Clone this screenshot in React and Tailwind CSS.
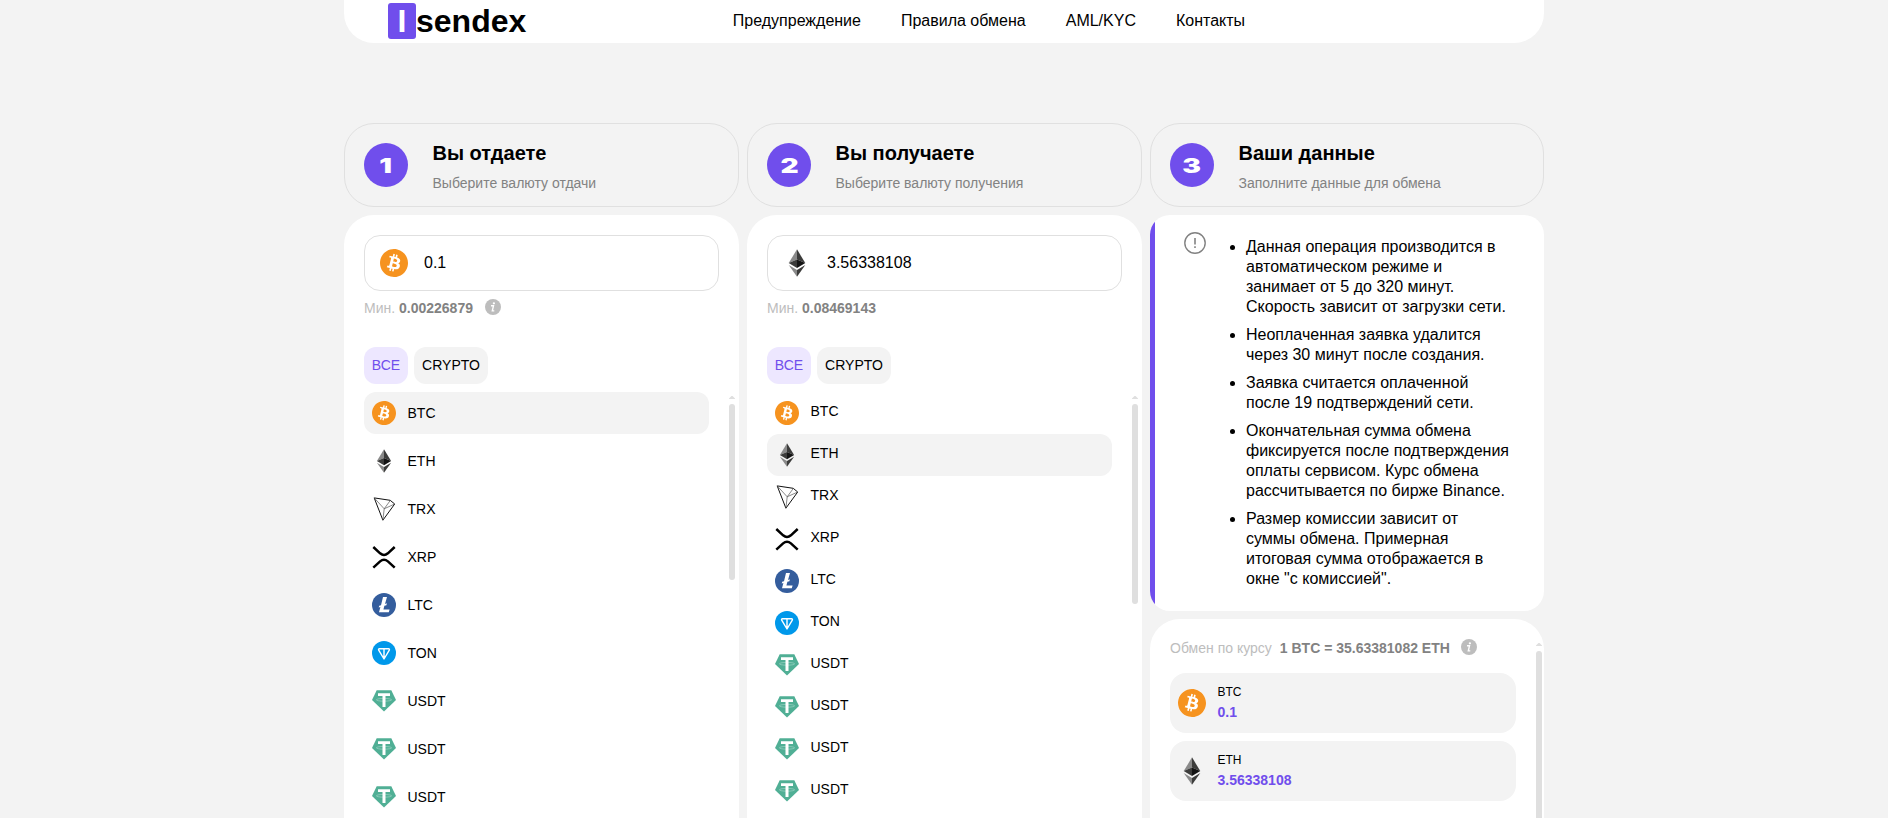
import { SiBitcoin } from "react-icons/si";

function Btc({ className }) {
  return (
    <span className={`block rounded-full bg-white ${className}`}>
      <SiBitcoin className="block size-full text-[#f6931f]" />
    </span>
  );
}

function Eth({ className }) {
  return (
    <svg viewBox="0 0 24 24" className={className}>
      <path d="M12 0.3 4.9 12.1 12 9z" fill="#8a8a8a" />
      <path d="M12 0.3 19.1 12.1 12 9z" fill="#3c3c3b" />
      <path d="M4.9 12.1 12 8.9v7.4z" fill="#3c3c3b" />
      <path d="M19.1 12.1 12 8.9v7.4z" fill="#141414" />
      <path d="M4.9 13.7 12 17.9v5.9z" fill="#8a8a8a" />
      <path d="M19.1 13.7 12 17.9v5.9z" fill="#3c3c3b" />
    </svg>
  );
}

function Trx({ className }) {
  return (
    <svg viewBox="0 0 24 24" className={className} fill="none" stroke="#111" strokeWidth="1" strokeLinejoin="round">
      <path d="M2.2 0.9 18.2 3.3 22.7 7 10.9 23.2z" />
      <path d="M2.2 0.9 12.2 11.8 22.7 7M12.2 11.8 10.9 23.2M12.2 11.8 18.2 3.6" stroke="#555" strokeWidth="0.7" />
    </svg>
  );
}

function Xrp({ className }) {
  return (
    <svg viewBox="0 0 24 24" className={className} fill="none" stroke="#000" strokeWidth="2.5">
      <path d="M1.300 2 8.100 8.300Q12 11.700 15.900 8.300L22.700 2" />
      <path d="M1.300 22.700 8.100 16.400Q12 13 15.900 16.400L22.700 22.700" />
    </svg>
  );
}

function Ltc({ className }) {
  return (
    <svg viewBox="0 0 24 24" className={className}>
      <circle cx="12" cy="12" r="12" fill="#345d9d" />
      <path d="M11 3.900h4l-2 7 1.900-.6-.5 1.900-2 .6-1 3.600h6.200l-.8 2.900H7l1.400-5.200-1.700.5.500-1.900 1.800-.5z" fill="#fff" />
    </svg>
  );
}

function Ton({ className }) {
  return (
    <svg viewBox="0 0 24 24" className={className}>
      <circle cx="12" cy="12" r="12" fill="#0098ea" />
      <path d="M7.5 7.700h9a.9.9 0 0 1 .8 1.400L12 18 6.700 9.100a.9.9 0 0 1 .8-1.400zM12 7.700V18" fill="none" stroke="#fff" strokeWidth="1.400" strokeLinejoin="round" />
    </svg>
  );
}

function Usdt({ className }) {
  return (
    <svg viewBox="0 0 24 24" className={className}>
      <path d="M4.700 1.200h14.600L24 11 12 22.500 0 11z" fill="#50af95" />
      <ellipse cx="12" cy="10.800" rx="7.600" ry="1.400" fill="none" stroke="#fff" strokeOpacity="0.6" strokeWidth="0.500" />
      <path d="M6 4.300h12v2.700h-4.500v11h-3V7H6z" fill="#fff" />
    </svg>
  );
}

const ICONS = { BTC: Btc, ETH: Eth, TRX: Trx, XRP: Xrp, LTC: Ltc, TON: Ton, USDT: Usdt };
const GIVE = ["BTC", "ETH", "TRX", "XRP", "LTC", "TON", "USDT", "USDT", "USDT"];
const RECEIVE = [...GIVE, "USDT"];

function Info() {
  return (
    <svg viewBox="0 0 16 16" className="size-4 shrink-0">
      <circle cx="8" cy="8" r="8" fill="#bdbdbd" />
      <circle cx="8.900" cy="4.300" r="1.150" fill="#fff" />
      <path d="M6 6.800h2.500L7.300 11.900h2" fill="none" stroke="#fff" strokeWidth="1.400" />
    </svg>
  );
}

function Step({ n, title, text }) {
  return (
    <div className="flex h-[84px] items-center rounded-[30px] border border-[#e0e0e0] pl-[19px]">
      <div className="flex size-11 shrink-0 items-center justify-center rounded-full bg-[#704eec]">
        <span className="scale-x-[1.4] pt-px font-['Inter',sans-serif] text-[20px] leading-none font-black text-white">{n}</span>
      </div>
      <div className="ml-[24.5px] pt-0.5">
        <div className="text-xl leading-6 font-bold">{title}</div>
        <div className="mt-2.5 text-sm leading-4 text-[#828282]">{text}</div>
      </div>
    </div>
  );
}

function Scroll({ className }) {
  return (
    <div className="flex w-1.5 flex-col items-center">
      <svg viewBox="0 0 6 3" className="h-[3px] w-1.5 shrink-0">
        <path d="M0 3V2.500L2.500 0h1L6 2.500V3z" fill="#dfdfdf" />
      </svg>
      <div className={`mt-[5px] w-1.5 shrink-0 rounded-[3px] bg-[#dfdfdf] ${className}`} />
    </div>
  );
}

function Panel({ coin, coins, amount, min, info, rowGap, labelShift, thumb }) {
  const Icon = ICONS[coin];
  return (
    <div className="h-[603px] overflow-hidden rounded-t-[30px] bg-white pt-5 pl-5">
      <div className="mr-5 flex h-14 items-center rounded-2xl border border-[#e0e0e0] pl-[15px]">
        <Icon className="size-7" />
        <span className="ml-4 text-base leading-5">{amount}</span>
      </div>
      <div className="mt-2 flex h-4 items-center text-sm leading-4 text-[#bdbdbd]">
        <span className="pt-0.5">
          Мин. <b className="text-[#828282]">{min}</b>
        </span>
        {info && (
          <span className="ml-3">
            <Info />
          </span>
        )}
      </div>
      <div className="mt-8 flex gap-1.5 text-sm leading-4">
        <div className="flex h-[37px] w-11 items-center justify-center rounded-xl bg-[#ede7ff] pb-px text-[#704eec]">ВСЕ</div>
        <div className="flex h-[37px] w-[74px] items-center justify-center rounded-xl bg-[#f3f3f3] pb-px">CRYPTO</div>
      </div>
      <div className="mt-2 flex">
        <div className={`flex w-[345px] flex-col ${rowGap}`}>
          {coins.map((c, i) => {
            const RowIcon = ICONS[c];
            return (
              <div key={i} className={`flex h-[42px] shrink-0 items-center rounded-xl pl-2 ${c === coin ? "bg-[#f3f3f3]" : ""}`}>
                <RowIcon className="size-6" />
                <span className={`ml-[11.5px] text-sm leading-4 ${labelShift}`}>{c}</span>
              </div>
            );
          })}
        </div>
        <div className="ml-5 pt-1">
          <Scroll className={thumb} />
        </div>
      </div>
    </div>
  );
}

const NOTES = [
  ["Данная операция производится в", "автоматическом режиме и", "занимает от 5 до 320 минут.", "Скорость зависит от загрузки сети."],
  ["Неоплаченная заявка удалится", "через 30 минут после создания."],
  ["Заявка считается оплаченной", "после 19 подтверждений сети."],
  ["Окончательная сумма обмена", "фиксируется после подтверждения", "оплаты сервисом. Курс обмена", "рассчитывается по бирже Binance."],
  ["Размер комиссии зависит от", "суммы обмена. Примерная", "итоговая сумма отображается в", 'окне "с комиссией".'],
];

function Summary({ coin, value }) {
  const Icon = ICONS[coin];
  return (
    <div className="flex h-[60px] w-[346px] items-center rounded-2xl bg-[#f3f3f3] pl-2">
      <Icon className="size-7" />
      <div className="ml-[11.5px] pb-0.5">
        <div className="text-xs leading-4">{coin}</div>
        <div className="mt-1 text-sm leading-4 font-bold text-[#704eec]">{value}</div>
      </div>
    </div>
  );
}

export default function App() {
  return (
    <div className="h-[818px] overflow-hidden bg-[#f3f3f3] font-['Liberation_Sans',Arial,sans-serif] text-black">
      <div className="mx-auto w-[1200px]">
        <header className="flex h-[43px] items-start rounded-b-[30px] bg-white pl-11">
          <div className="flex pt-[3px] text-[32px] leading-9 font-bold">
            <span className="flex h-9 w-7 justify-center rounded-[3px] bg-[#704eec] text-white">I</span>
            <span>sendex</span>
          </div>
          <nav className="ml-[206.500px] flex gap-10 pt-[11px] text-base leading-5">
            <a>Предупреждение</a>
            <a>Правила обмена</a>
            <a>AML/KYC</a>
            <a>Контакты</a>
          </nav>
        </header>
        <main className="mt-20 grid grid-cols-[395px_395px_394px] gap-2">
          <Step n="1" title="Вы отдаете" text="Выберите валюту отдачи" />
          <Step n="2" title="Вы получаете" text="Выберите валюту получения" />
          <Step n="3" title="Ваши данные" text="Заполните данные для обмена" />
          <Panel coin="BTC" coins={GIVE} amount="0.1" min="0.00226879" info rowGap="gap-1.5" labelShift="" thumb="h-44" />
          <Panel coin="ETH" coins={RECEIVE} amount="3.56338108" min="0.08469143" rowGap="" labelShift="pb-1" thumb="h-[200px]" />
          <div className="flex h-[603px] flex-col gap-2 overflow-hidden">
            <section className="flex h-[396px] shrink-0 overflow-hidden rounded-[20px] bg-white">
              <div className="w-[5px] shrink-0 bg-[#704eec]" />
              <div className="flex pt-[17px] pl-[29px]">
                <svg viewBox="0 0 22 22" className="size-[22px] shrink-0" fill="none" stroke="#828282">
                  <circle cx="11" cy="11" r="10.200" strokeWidth="1.400" />
                  <path d="M11 6v6.500M11 14.200v1.800" strokeWidth="1.600" />
                </svg>
                <ul className="ml-10 flex list-disc flex-col gap-2 pt-[5px] text-base leading-5 whitespace-nowrap">
                  {NOTES.map((lines) => (
                    <li key={lines[0]}>
                      {lines.map((l) => (
                        <span key={l} className="block">
                          {l}
                        </span>
                      ))}
                    </li>
                  ))}
                </ul>
              </div>
            </section>
            <section className="flex h-[199px] shrink-0 overflow-hidden rounded-t-[30px] bg-white pt-5 pl-5">
              <div className="w-[346px]">
                <div className="flex h-4 items-center text-sm leading-4 text-[#bdbdbd]">
                  <span className="pt-0.5">Обмен по курсу</span>
                  <b className="ml-2 pt-0.5 text-[#828282]">1 BTC = 35.63381082 ETH</b>
                  <span className="ml-[11px]">
                    <Info />
                  </span>
                </div>
                <div className="mt-[18px] flex flex-col gap-2">
                  <Summary coin="BTC" value="0.1" />
                  <Summary coin="ETH" value="3.56338108" />
                </div>
              </div>
              <div className="ml-5 pt-1">
                <Scroll className="h-60" />
              </div>
            </section>
          </div>
        </main>
      </div>
    </div>
  );
}
